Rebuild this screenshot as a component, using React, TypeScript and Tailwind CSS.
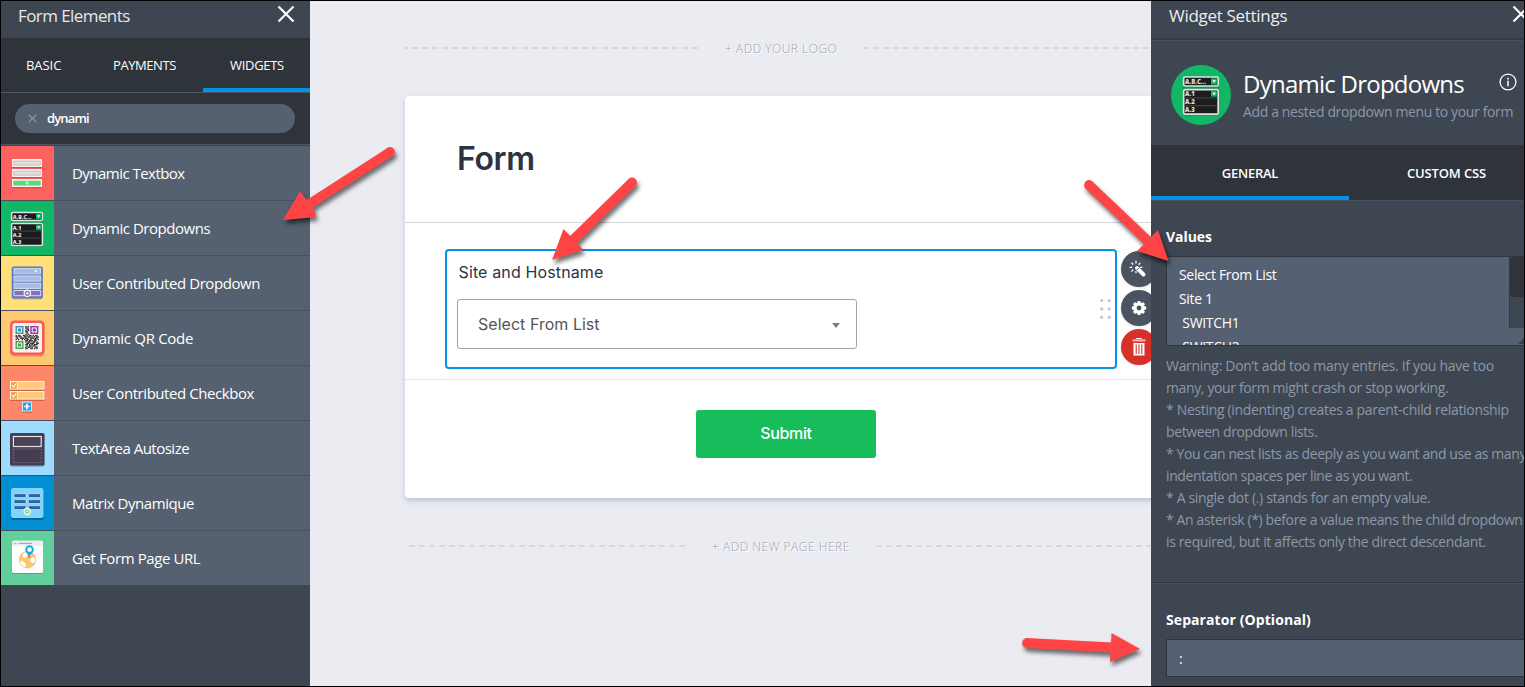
import type { ReactNode } from 'react';

const sans = "font-['Open_Sans',sans-serif]";
const inter = "font-['Inter',sans-serif]";

function Close({ className }: { className: string }) {
  return (
    <svg viewBox="0 0 18 18" className={className}>
      <path d="M1.5 1.5 16.5 16.5M16.5 1.5 1.5 16.5" stroke="#fff" strokeWidth="2.2" fill="none" />
    </svg>
  );
}

function DropdownGlyph() {
  return (
    <g>
      <rect x="0" y="1.5" width="32" height="34" rx="1.5" fill="#0a6b3a" opacity="0.45" />
      <rect x="0.6" y="0.9" width="30.8" height="8" rx="1.2" fill="#1c1c1e" stroke="#dfe3e2" strokeWidth="1.5" />
      <rect x="0.6" y="12.1" width="30.8" height="22" rx="1.2" fill="#1c1c1e" stroke="#dfe3e2" strokeWidth="1.5" />
      <rect x="25" y="2.1" width="5.2" height="5.6" fill="#12b765" />
      <path d="M26 3.8h3.4l-1.7 2.2z" fill="#fff" />
      <rect x="25" y="13.4" width="5.2" height="5" fill="#12b765" />
      <path d="M26 14.9h3.4l-1.7 2.2z" fill="#fff" />
      <path d="M1.3 19.6h29.4M1.3 26.6h29.4" stroke="#55585a" strokeWidth="0.7" />
      <g fill="#dedede" fontFamily="Open Sans, sans-serif" fontWeight="800" fontSize="5.4">
        <text x="1.8" y="7">A.B.C...</text>
        <text x="1.8" y="18.100">A.1</text>
        <text x="1.8" y="25.200">A.2</text>
        <text x="1.8" y="32.200">A.3</text>
      </g>
    </g>
  );
}

const qrRows = [
  '0000000010100000000',
  '0000000011000000000',
  '0000000001100000000',
  '0000000010100000000',
  '0000000011000000000',
  '0000000001000000000',
  '0000000010100000000',
  '1011001101011010110',
  '1101100110110101011',
  '0100111011001110110',
  '1010010101101001101',
  '0000000011011101100',
  '0000000010110011010',
  '0000000001101110011',
  '0000000011010101110',
  '0000000001011011000',
  '0000000010110100110',
  '0000000011001101010',
];

function Finder({ x, y, c }: { x: number; y: number; c: string }) {
  return (
    <g>
      <rect x={x + 0.7} y={y + 0.7} width="6.6" height="6.6" fill="none" stroke={c} strokeWidth="1.4" />
      <rect x={x + 2.5} y={y + 2.5} width="3" height="3" fill={c} />
    </g>
  );
}

const glyphs: Record<string, ReactNode> = {
  textbox: (
    <g>
      {[13, 23, 33].map((y, i) => (
        <g key={y}>
          <rect x="11" y={y + 1.2} width="30" height="8" rx="0.6" fill="#b9403c" opacity="0.6" />
          <rect x="11" y={y} width="30" height="8" rx="0.6" fill="#f7f2f1" />
          <rect x="12.8" y={y + 2.1} width="26.4" height="4" fill={i === 2 ? '#5cd974' : '#e3dfde'} stroke={i === 2 ? '#5cd974' : '#b9b5b4'} strokeWidth="0.8" />
        </g>
      ))}
      <path d="M24.400 37.100h3.200M26 35.500v3.200" stroke="#fff" strokeWidth="1" />
    </g>
  ),
  dropdowns: (
    <g transform="translate(10 10.500)">
      <DropdownGlyph />
    </g>
  ),
  contributed: (
    <g>
      <rect x="10.8" y="11.5" width="31" height="32" rx="2" fill="#b79a52" opacity="0.6" />
      <rect x="10.8" y="10.5" width="31" height="32" rx="1.8" fill="#5d78c6" />
      {[12.6, 19.9, 27.2, 34.5].map((y, i) => (
        <rect key={y} x="13" y={y} width="26.6" height="5.2" fill={i === 3 ? '#8a6fb0' : '#a9bbdf'} stroke="#cfdcf5" strokeWidth="1" />
      ))}
      <path d="M33 14.4h3.4l-1.7 2z" fill="#fff" />
      <circle cx="26.3" cy="37.3" r="3.2" fill="#8a6fb0" stroke="#fff" strokeWidth="1.1" />
      <path d="M24.7 37.3h3.2M26.3 35.7v3.2" stroke="#fff" strokeWidth="0.9" />
    </g>
  ),
  qr: (
    <g>
      <rect x="9" y="11.5" width="34.5" height="34" rx="4.5" fill="#a5702e" opacity="0.5" />
      <rect x="9" y="9.5" width="34.5" height="34.5" rx="4.5" fill="#fd5a54" />
      <rect x="11.5" y="12" width="29.5" height="29.5" rx="2.5" fill="#f4f1ef" />
      <g fill="#2c2827">
        {qrRows.flatMap((row, r) =>
          [...row].map((v, c) =>
            v === '1' ? <rect key={`${r}-${c}`} x={14.5 + c * 1.22} y={15 + r * 1.28} width="1.4" height="1.4" /> : null,
          ),
        )}
      </g>
      <Finder x={14.5} y={15} c="#3b94ab" />
      <Finder x={29.3} y={15} c="#9a2fb5" />
      <Finder x={14.5} y={30} c="#45a54f" />
    </g>
  ),
  checkbox: (
    <g>
      {[15, 25].map((y) => (
        <g key={y}>
          <rect x="9" y={y + 1.4} width="34.5" height="8.6" rx="0.6" fill="#b8553f" opacity="0.7" />
          <rect x="9.5" y={y + 0.5} width="33.5" height="7.6" fill="#fdca7c" stroke="#fff0dc" strokeWidth="1" />
          <path d={`M16.4 ${y + 0.5}v7.6`} stroke="#fff0dc" strokeWidth="1" />
          <rect x="10" y={y + 1} width="5.9" height="6.6" fill="#e9a74e" />
          <path d={`M11 ${y + 4.2}l1.6 1.7 2.8-3.4`} stroke="#fff" strokeWidth="1.1" fill="none" />
        </g>
      ))}
      <rect x="21" y="37" width="10" height="10" fill="#b8553f" opacity="0.6" />
      <rect x="21.5" y="36" width="9" height="9" fill="#2c9fe0" stroke="#e4f2fa" strokeWidth="0.9" />
      <path d="M23.3 40.5h5.4M26 37.8v5.4" stroke="#fff" strokeWidth="1.7" />
    </g>
  ),
  textarea: (
    <g>
      <rect x="9" y="12.8" width="34.5" height="33" rx="1.8" fill="#5f86a2" opacity="0.6" />
      <rect x="9" y="12" width="34.5" height="32.6" rx="1.6" fill="#453e50" />
      <rect x="12.4" y="15.5" width="27.8" height="10" fill="#4a4355" stroke="#e4e1e6" strokeWidth="1.2" />
      <path d="M12.4 28v13.6h27.8v-13.6z" fill="none" stroke="#777082" strokeWidth="0.9" strokeDasharray="1.6 1.2" />
    </g>
  ),
  matrix: (
    <g>
      <rect x="10" y="13" width="32.5" height="31" rx="2.2" fill="#01598c" opacity="0.7" />
      <rect x="10" y="12" width="32.5" height="30" rx="2.2" fill="#80d3fb" />
      {[17.700, 23.700, 29.700].map((y) => (
        <g key={y} fill="#2f60a0" stroke="#c4eafc" strokeWidth="0.700">
          <rect x="13" y={y} width="12" height="3.8" rx="0.5" />
          <rect x="27.4" y={y} width="12" height="3.8" rx="0.5" />
        </g>
      ))}
      <circle cx="26.2" cy="35.500" r="3.7" fill="#e8f9ee" />
      <circle cx="26.2" cy="35.500" r="2.3" fill="#6cd66d" />
      <path d="M25 35.500h2.4M26.2 34.300v2.4" stroke="#fff" strokeWidth="0.7" />
    </g>
  ),
  url: (
    <g>
      <rect x="11" y="10.8" width="31" height="32.2" rx="1.6" fill="#3d8f67" opacity="0.6" />
      <rect x="11" y="9.8" width="31" height="32.2" rx="1.6" fill="#fff" />
      <rect x="11" y="9.8" width="31" height="5" rx="1.2" fill="#ececf0" />
      <path d="M12.4 12.4h4" stroke="#ef8d7d" strokeWidth="1" strokeDasharray="1 0.6" />
      <path d="M18 12.4h13" stroke="#8b8b90" strokeWidth="0.8" />
      <circle cx="26.5" cy="28.700" r="8.7" fill="#fdc471" />
      <path d="M19.300 29.500c2 .500 4 1.500 5.500 3l-.500 3.700c-3-.700-5-3.200-5-6.700zM22 22.500l3-1.500 1.500 4-2.500 2-2.500-1zM29.500 27.500l3-1.500 1.800 2.500-.500 3-2.800.500-2-2z" fill="#fff" />
      <path d="M28.200 27v-4" stroke="#e14587" strokeWidth="1.200" />
      <circle cx="28.500" cy="18.600" r="3.300" fill="#fff" stroke="#0eaae8" strokeWidth="2" />
      <path d="M25.800 21.200h5.400l-2.700 4z" fill="#0eaae8" />
    </g>
  ),
};

const widgets = [
  { name: 'Dynamic Textbox', glyph: 'textbox', bg: 'bg-[#fd625e]', track: 'tracking-[-0.53px]' },
  { name: 'Dynamic Dropdowns', glyph: 'dropdowns', bg: 'bg-[#12b765]', track: 'tracking-[-0.47px]' },
  { name: 'User Contributed Dropdown', glyph: 'contributed', bg: 'bg-[#ffdf77]', track: 'tracking-[-0.44px]' },
  { name: 'Dynamic QR Code', glyph: 'qr', bg: 'bg-[#fec871]', track: 'tracking-[-0.3px]' },
  { name: 'User Contributed Checkbox', glyph: 'checkbox', bg: 'bg-[#fe876a]', track: 'tracking-[-0.44px]' },
  { name: 'TextArea Autosize', glyph: 'textarea', bg: 'bg-[#9fdaff]', track: 'tracking-[-0.5px]' },
  { name: 'Matrix Dynamique', glyph: 'matrix', bg: 'bg-[#018ed2]', track: 'tracking-[-0.46px]' },
  { name: 'Get Form Page URL', glyph: 'url', bg: 'bg-[#60cf9b]', track: 'tracking-[-0.4px]' },
];

function LeftPanel() {
  return (
    <aside className={`flex w-[309px] shrink-0 flex-col bg-[#3e4651] text-white ${sans}`}>
      <header className="flex h-[37px] items-start justify-between pr-[15px] pl-[17px]">
        <h2 className="pt-[4px] text-[17px] leading-[22px] tracking-[-0.58px] text-[#e6e8ea]">Form Elements</h2>
        <Close className="mt-[4px] h-[18px] w-[18px]" />
      </header>
      <nav className="flex h-[55px] border-b border-[#4c5564] bg-[#2f333a] text-[13px] leading-[54px]">
        <span className="w-[112px] pl-[25px] tracking-[-0.05px]">BASIC</span>
        <span className="w-[90px] tracking-[-0.42px]">PAYMENTS</span>
        <span className="h-[54px] flex-1 border-b-4 border-[#0293e4] pl-[27px] tracking-[-0.3px]">WIDGETS</span>
      </nav>
      <div className="flex h-[52px] items-center border-b border-[#4c5564] bg-[#2f333a] px-[14px]">
        <div className="flex h-[29px] w-[280px] items-center rounded-full bg-[#556071] pl-[13px]">
          <svg viewBox="0 0 9 9" className="h-[9px] w-[9px]">
            <path d="M.6.600l7.800 7.800M8.400.600l-7.800 7.800" stroke="#8d98aa" strokeWidth="1.300" />
          </svg>
          <span className="mb-[2px] ml-[10px] text-[13px] leading-[20px] font-semibold tracking-[-0.85px]">dynami</span>
        </div>
      </div>
      <ul className="border-t border-[#3e4651]">
        {widgets.map((w) => (
          <li key={w.name} className="flex h-[55px] border-b border-[#475060] bg-[#556070] last:h-[54px] last:border-b-0">
            <span className={`h-[54px] w-[53px] shrink-0 ${w.bg}`}>
              <svg viewBox="0 0 53 54" className="h-[54px] w-[53px]">{glyphs[w.glyph]}</svg>
            </span>
            <span className={`pl-[18px] text-[15px] leading-[55px] whitespace-nowrap ${w.track}`}>{w.name}</span>
          </li>
        ))}
      </ul>
    </aside>
  );
}

const dashes = 'h-[2px] bg-[repeating-linear-gradient(90deg,#d8d9de_0px,#d8d9de_6px,transparent_6px,transparent_10px)]';
const hint = "text-[12px] leading-[16px] whitespace-nowrap text-[#a0a3a8] [text-shadow:1px_1px_0_#fff] font-['Open_Sans',sans-serif] font-light";

function Canvas() {
  return (
    <main className={`flex w-[841px] shrink-0 flex-col overflow-hidden bg-[#ebecf2] pl-[95px] ${inter}`}>
      <div className="flex h-[95px] shrink-0 items-start pt-[39px]">
        <div className={`mt-[7px] w-[293px] bg-[position:-3px_0] ${dashes}`} />
        <span className={`mt-[1px] ml-[27px] w-[138px] tracking-[0.5px] ${hint}`}>+ ADD YOUR LOGO</span>
        <div className={`mt-[7px] flex-1 ${dashes}`} />
      </div>
      <section className="h-[402px] w-[760px] shrink-0 rounded bg-white shadow-[0_3px_5px_rgba(130,135,170,0.4)]">
        <div className="h-[127px] border-b border-[#d5d6e0] pt-[43px] pl-[52px]">
          <h1 className="text-[32px] leading-[40px] font-semibold tracking-[-0.35px] text-[#2c3345]">Form</h1>
        </div>
        <div className="flex h-[157px] border-b border-[#e3e4eb] pt-[26px] pl-[40px]">
          <div className="flex h-[120px] w-[672px] justify-between rounded border-2 border-[#0293e4] pr-[4px] pl-[10px]">
            <div>
              <div className="pt-[11px] pl-[1.500px] text-[16px] leading-[20px] tracking-[0.13px] text-[#2c3345]">Site and Hostname</div>
              <div className="mt-[17px] flex h-[50px] w-[400px] items-center justify-between rounded-[3px] border border-[#a3a3a3] pr-[16px] pl-[20px]">
                <span className="text-[16px] tracking-[0.03px] text-[#555]">Select From List</span>
                <svg viewBox="0 0 8 5" className="mt-[2px] h-[5px] w-[8px]">
                  <path d="M0 0h8L4 5z" fill="#7d7d7d" />
                </svg>
              </div>
            </div>
            <svg viewBox="0 0 11 20" className="mt-[48px] h-[20px] w-[11px]" fill="#c2c6d6">
              {[1.600, 9.900, 18.200].map((y) => (
                <g key={y}>
                  <circle cx="1.700" cy={y} r="1.600" />
                  <circle cx="9.200" cy={y} r="1.600" />
                </g>
              ))}
            </svg>
          </div>
          <div className="ml-[4px] flex flex-col gap-[3px] pt-[1.500px]">
            <span className="flex h-9 w-9 items-center justify-center rounded-full bg-[#4a535f] shadow">
              <svg viewBox="0 0 18 18" className="mr-[2px] h-[18px] w-[18px]">
                <path d="M8 8l6.500 6.500" stroke="#fff" strokeWidth="3.900" strokeLinecap="round" />
                <path d="M10.200 7.600 7.600 10.200" stroke="#4a535f" strokeWidth="0.900" />
                <path d="M7 3.400V.800M4.200 4.500 2.500 2.700M3.200 7.300H.600M4.200 9.800 2.500 11.500M7 11v2.200M9.600 4.700l1.700-1.800M11 7.300h2.400" stroke="#fff" strokeWidth="1.300" />
              </svg>
            </span>
            <span className="flex h-9 w-9 items-center justify-center rounded-full bg-[#4a535f] shadow">
              <svg viewBox="0 0 16 16" className="mr-px h-[16px] w-[16px]">
                <g fill="#fff">
                  <circle cx="8" cy="8" r="5.600" />
                  {[0, 45, 90, 135].map((a) => (
                    <rect key={a} x="6.300" y="0.900" width="3.400" height="14.200" rx="1" transform={`rotate(${a} 8 8)`} />
                  ))}
                </g>
                <circle cx="8" cy="8" r="2.400" fill="#4a535f" />
              </svg>
            </span>
            <span className="flex h-9 w-9 items-center justify-center rounded-full bg-[#d63029] shadow">
              <svg viewBox="0 0 14 18" className="mr-px h-[18px] w-[14px]">
                <path d="M4.500 1.300V.500h5v.800" stroke="#fff" fill="none" />
                <rect x="0.500" y="1.300" width="13" height="2.200" fill="#f3b3b0" />
                <path d="M1.500 5h11v12.500h-11z" fill="#fff" />
                <path d="M4.200 6.500v9.500M7 6.500v9.500M9.800 6.500v9.500" stroke="#d63029" strokeWidth="1.100" />
              </svg>
            </span>
          </div>
        </div>
        <div className="pt-[30px] pl-[291px]">
          <button className="h-12 w-[180px] rounded-[3px] bg-[#18bd5b] pb-[2px] text-[16px] font-medium tracking-[-0.35px] text-white">Submit</button>
        </div>
      </section>
      <div className="flex items-start pt-[41px] pl-[4px]">
        <div className={`mt-[6px] w-[276px] ${dashes}`} />
        <span className={`ml-[27px] w-[164px] tracking-[0.52px] ${hint}`}>+ ADD NEW PAGE HERE</span>
        <div className={`mt-[6px] flex-1 ${dashes}`} />
      </div>
    </main>
  );
}

const help = [
  { text: 'Warning: Don’t add too many entries. If you have too', track: 'tracking-[-0.3px]' },
  { text: 'many, your form might crash or stop working.', track: 'tracking-[-0.37px]' },
  { text: '* Nesting (indenting) creates a parent-child relationship', track: 'tracking-[-0.33px]' },
  { text: 'between dropdown lists.', track: 'tracking-[-0.4px]' },
  { text: '* You can nest lists as deeply as you want and use as many', track: 'tracking-[-0.41px]' },
  { text: 'indentation spaces per line as you want.', track: 'tracking-[-0.38px]' },
  { text: '* A single dot (.) stands for an empty value.', track: 'tracking-[-0.33px]' },
  { text: '* An asterisk (*) before a value means the child dropdown', track: 'tracking-[-0.37px]' },
  { text: 'is required, but it affects only the direct descendant.', track: 'tracking-[-0.36px]' },
];

function RightPanel() {
  return (
    <aside className={`flex w-[373px] shrink-0 flex-col overflow-hidden bg-[#3e4651] text-white ${sans}`}>
      <header className="flex h-[39px] shrink-0 items-start justify-between border-b-2 border-[#353c46] pl-[18px]">
        <h2 className="pt-[4px] text-[17px] leading-[22px] tracking-[-0.3px] text-[#eceef0]">Widget Settings</h2>
        <Close className="mt-[4px] -mr-[6px] h-[18px] w-[18px] shrink-0" />
      </header>
      <div className="flex h-[105px] shrink-0 border-t border-[#49515e] pt-[24px] pl-[20px]">
        <svg viewBox="0 0 60 60" className="h-[60px] w-[60px] shrink-0">
          <circle cx="30" cy="30" r="30" fill="#12b765" />
          <g transform="translate(12 11) scale(1.120)">
            <DropdownGlyph />
          </g>
        </svg>
        <div className="ml-[12px] w-[280px] shrink-0">
          <div className="flex items-start">
            <h3 className="mt-[2px] mb-px w-[256px] text-[24px] leading-[34px] tracking-[-0.75px] whitespace-nowrap">Dynamic Dropdowns</h3>
            <svg viewBox="0 0 18 18" className="mt-[8px] h-[18px] w-[18px]">
              <circle cx="9" cy="9" r="7.900" fill="none" stroke="#fff" strokeWidth="1.300" />
              <path d="M9 7.800v5.400M9 4.700v1.700" stroke="#fff" strokeWidth="1.500" />
            </svg>
          </div>
          <p className="text-[14px] leading-[20px] tracking-[-0.37px] whitespace-nowrap text-[#8d98aa]">Add a nested dropdown menu to your form</p>
        </div>
      </div>
      <nav className="flex h-[56px] shrink-0 border-b border-[#49515e] bg-[#2f333a] text-center text-[13px] leading-[56px] font-semibold">
        <span className="h-[55px] w-[198px] shrink-0 border-b-4 border-[#0293e4] tracking-[-0.26px]">GENERAL</span>
        <span className="w-[195px] shrink-0 tracking-[-0.15px]">CUSTOM CSS</span>
      </nav>
      <section className="h-[382px] shrink-0 border-b border-[#2f363f] pl-[15px]">
        <h4 className="pt-[26px] text-[14px] leading-[20px] font-bold tracking-[-0.05px]">Values</h4>
        <div className="mt-[9px] flex h-[90px] w-[358px] justify-between overflow-hidden border border-r-0 border-[#2f343d] bg-[#556072]">
          <pre className="pt-[6px] pl-[12px] font-['Open_Sans',sans-serif] text-[14px] leading-[24px] tracking-[-0.33px]">{'Select From List\nSite 1\n SWITCH1\n SWITCH2'}</pre>
          <div className="flex w-[15px] flex-col">
            <div className="h-[71px] border-l border-[#343b45] bg-[#3e4651]">
              <div className="h-[40px] rounded-l bg-[#2f333a]" />
            </div>
            <svg viewBox="0 0 15 17" className="h-[17px] w-[15px]">
              <path d="M9 16l6-6v6z" fill="#3a414c" />
            </svg>
          </div>
        </div>
        <div className="pt-[9px] text-[14px] leading-[22px] whitespace-nowrap text-[#8d98aa]">
          {help.map((line) => (
            <p key={line.text} className={line.track}>{line.text}</p>
          ))}
        </div>
      </section>
      <section className="border-t border-[#49515e] pl-[15px]">
        <h4 className="pt-[26px] text-[14px] leading-[20px] font-bold tracking-[0.08px]">Separator (Optional)</h4>
        <div className="mt-[9px] h-[38px] border border-r-0 border-[#2f343d] bg-[#556072] pl-[12px] text-[14px] leading-[38px]">:</div>
      </section>
    </aside>
  );
}

const arrows = [
  { tail: [390, 152], joint: [307, 205.500], head: '283,220 300,191.500 307,200 314,209 316,217' },
  { tail: [632, 182.500], joint: [573, 240], head: '552,260 563.500,229 583.500,250' },
  { tail: [1089, 185], joint: [1148, 241], head: '1168.500,261 1158,230 1137,251' },
  { tail: [1027, 643], joint: [1112, 647.500], head: '1140,649 1111.500,633 1110,662' },
];

function Arrows() {
  return (
    <svg viewBox="0 0 1525 687" className="h-[687px] w-[1525px] [filter:drop-shadow(2px_4px_2px_rgba(0,0,0,0.55))]">
      {arrows.map((a) => (
        <g key={a.head} fill="#fe4445">
          <circle cx={a.tail[0]} cy={a.tail[1]} r="4.900" />
          <path d={`M${a.tail[0]} ${a.tail[1]}L${a.joint[0]} ${a.joint[1]}`} stroke="#fe4445" strokeWidth="9.800" />
          <polygon points={a.head} />
        </g>
      ))}
    </svg>
  );
}

export default function App() {
  return (
    <div className="relative flex h-[687px] w-[1525px] overflow-hidden border border-black bg-[#ebecf2]">
      <LeftPanel />
      <Canvas />
      <RightPanel />
      <div className="pointer-events-none absolute -top-px -left-px">
        <Arrows />
      </div>
    </div>
  );
}
